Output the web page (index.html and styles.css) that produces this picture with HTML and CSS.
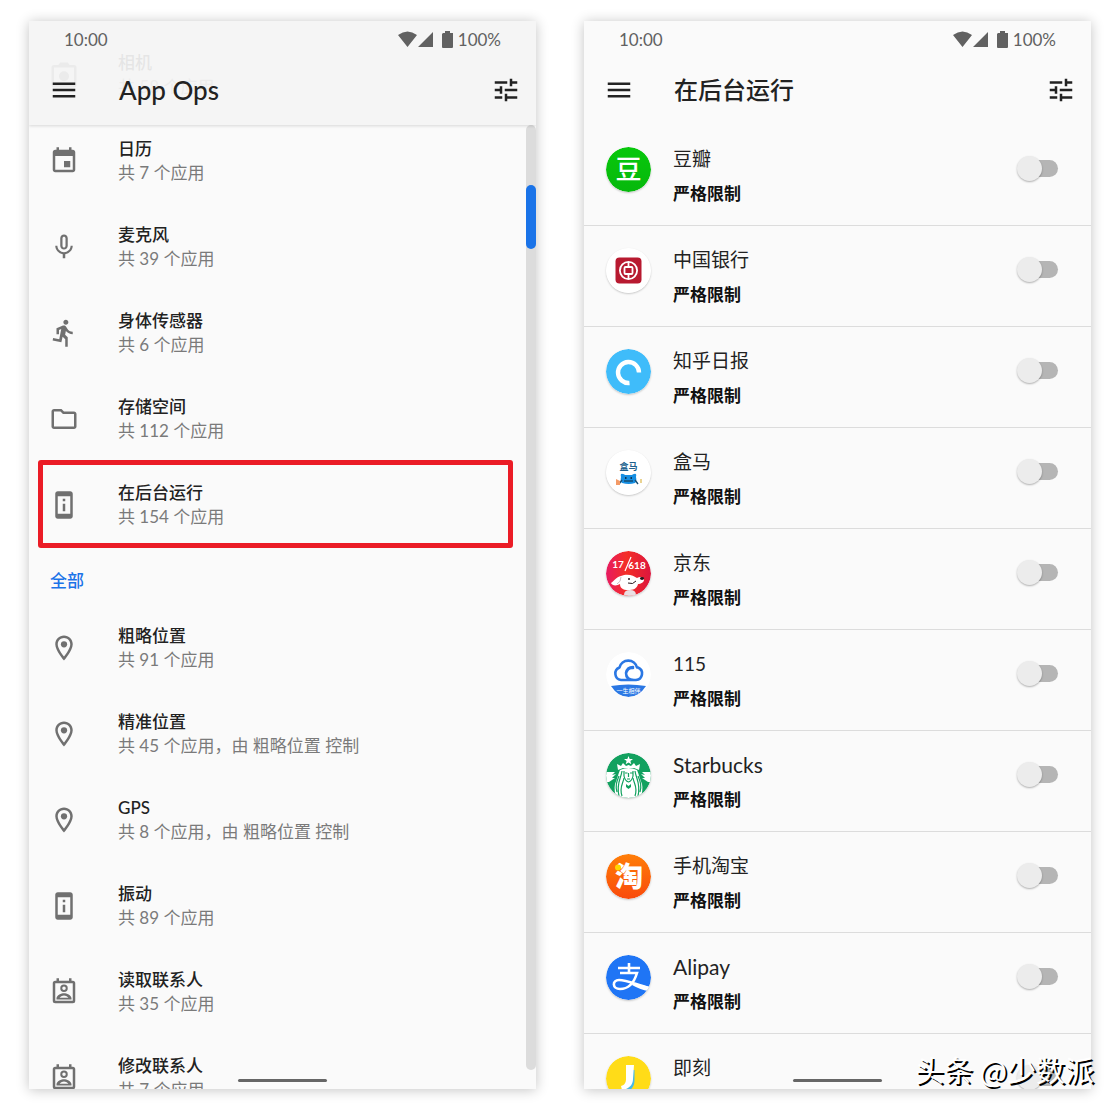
FILE: index.html
```html
<!DOCTYPE html>
<html lang="zh-CN">
<head>
<meta charset="utf-8">
<meta name="viewport" content="width=device-width, initial-scale=1">
<title>App Ops</title>
<link rel="stylesheet" href="styles.css">
</head>
<body>
<svg class="sprite" aria-hidden="true">
  <symbol id="menu" viewBox="0 0 24 24"><path d="M3 18h18v-2H3v2zm0-5h18v-2H3v2zm0-7v2h18V6H3z"/></symbol>
  <symbol id="tune" viewBox="0 0 24 24"><path d="M3 17v2h6v-2H3zM3 5v2h10V5H3zm10 16v-2h8v-2h-8v-2h-2v6h2zM7 9v2H3v2h4v2h2V9H7zm14 4v-2H11v2h10zm-6-4h2V7h4V5h-4V3h-2v6z"/></symbol>
  <symbol id="signals" viewBox="0 0 56 18"><path d="M0 4Q9.500-3 19 4L9.500 16zM20 16L35 1V16zM45 2h2V0h5v2h3v14q0 1-1 1h-9q-1 0-1-1V3z"/></symbol>
  <symbol id="camera" viewBox="0 0 24 24"><path fill-rule="evenodd" d="M9 2L7.500 4H4a2 2 0 0 0-2 2v14a2 2 0 0 0 2 2h16a2 2 0 0 0 2-2V6a2 2 0 0 0-2-2h-3.500L15 2zM4 6h16v14H4z"/><circle cx="12" cy="13" r="4"/></symbol>
  <symbol id="calendar" viewBox="0 0 24 24"><path d="M17 12h-5v5h5v-5zM16 1v2H8V1H6v2H5c-1.110 0-1.990.9-1.990 2L3 19c0 1.100.89 2 2 2h14c1.100 0 2-.9 2-2V5c0-1.100-.9-2-2-2h-1V1h-2zm3 18H5V8h14v11z"/></symbol>
  <symbol id="mic" viewBox="0 0 24 24"><path d="M12 14c1.660 0 2.990-1.340 2.990-3L15 5c0-1.660-1.340-3-3-3S9 3.340 9 5v6c0 1.660 1.340 3 3 3zm-1.200-9.100c0-.66.54-1.200 1.200-1.200.66 0 1.200.54 1.200 1.200l-.01 6.200c0 .66-.53 1.200-1.190 1.200-.66 0-1.200-.54-1.200-1.200V4.900zm6.500 6.100c0 3-2.540 5.100-5.300 5.100S6.700 14 6.700 11H5c0 3.410 2.720 6.230 6 6.720V21h2v-3.280c3.280-.48 6-3.300 6-6.720h-1.700z"/></symbol>
  <symbol id="run" viewBox="0 0 24 24"><path d="M13.490 5.480c1.100 0 2-.9 2-2s-.9-2-2-2-2 .9-2 2 .9 2 2 2zm-3.600 13.900l1-4.400 2.100 2v6h2v-7.500l-2.100-2 .6-3c1.300 1.500 3.300 2.500 5.500 2.500v-2c-1.900 0-3.500-1-4.300-2.400l-1-1.600c-.4-.6-1-1-1.700-1-.3 0-.5.1-.8.1l-5.200 2.200v4.700h2v-3.400l1.800-.7-1.600 8.100-4.900-1-.4 2 7 1.400z"/></symbol>
  <symbol id="folder" viewBox="0 0 24 24"><path fill-rule="evenodd" d="M9.170 6l2 2H20v10H4V6h5.170M10 4H4c-1.100 0-1.990.9-1.990 2L2 18c0 1.100.9 2 2 2h16c1.100 0 2-.9 2-2V8c0-1.100-.9-2-2-2h-8l-2-2z"/></symbol>
  <symbol id="device" viewBox="0 0 24 24"><path d="M13 7h-2v2h2V7zm0 4h-2v6h2v-6zm4-9.990L7 1c-1.100 0-2 .9-2 2v18c0 1.100.9 2 2 2h10c1.100 0 2-.9 2-2V3c0-1.100-.9-1.990-2-1.990zM17 19H7V5h10v14z"/></symbol>
  <symbol id="place" viewBox="0 0 24 24"><path d="M12 2C8.130 2 5 5.130 5 9c0 5.250 7 13 7 13s7-7.750 7-13c0-3.870-3.130-7-7-7zM7 9c0-2.760 2.240-5 5-5s5 2.240 5 5c0 2.880-2.880 7.190-5 9.880C9.920 16.210 7 11.850 7 9z"/><circle cx="12" cy="9" r="2.500"/></symbol>
  <symbol id="contact" viewBox="0 0 24 24"><path fill-rule="evenodd" d="M5 3h1V1h2v2h8V1h2v2h1a2 2 0 0 1 2 2v14a2 2 0 0 1-2 2H5a2 2 0 0 1-2-2V5a2 2 0 0 1 2-2zM5 5v14h14V5zM12 6a3 3 0 1 1 0 6a3 3 0 0 1 0-6zM12 7.600a1.400 1.400 0 1 0 0 2.800a1.400 1.400 0 0 0 0-2.800zM6 18v-1c0-2.500 4-4 6-4s6 1.500 6 4v1zM8.500 16.500h7C14.500 15.300 13 14.700 12 14.700s-2.500.6-3.500 1.800z"/></symbol>
</svg>

<main class="stage">
  <section class="phone">
    <header class="header header-raised">
      <div class="status"><span>10:00</span><span class="status-right"><svg class="signals"><use href="#signals"/></svg>100%</span></div>
      <div class="bar">
        <button class="icon-button" aria-label="菜单"><svg class="icon"><use href="#menu"/></svg></button>
        <h1 class="latin-title">App Ops</h1>
        <button class="icon-button" aria-label="筛选"><svg class="icon"><use href="#tune"/></svg></button>
      </div>
    </header>
    <div class="viewport">
      <div class="list">
        <a class="op" href="#"><svg class="icon"><use href="#camera"/></svg><span><b>相机</b><small>共 58 个应用</small></span></a>
        <a class="op" href="#"><svg class="icon"><use href="#calendar"/></svg><span><b>日历</b><small>共 7 个应用</small></span></a>
        <a class="op" href="#"><svg class="icon"><use href="#mic"/></svg><span><b>麦克风</b><small>共 39 个应用</small></span></a>
        <a class="op" href="#"><svg class="icon"><use href="#run"/></svg><span><b>身体传感器</b><small>共 6 个应用</small></span></a>
        <a class="op" href="#"><svg class="icon"><use href="#folder"/></svg><span><b>存储空间</b><small>共 112 个应用</small></span></a>
        <a class="op op-marked" href="#"><svg class="icon"><use href="#device"/></svg><span><b>在后台运行</b><small>共 154 个应用</small></span></a>
        <h2>全部</h2>
        <a class="op" href="#"><svg class="icon"><use href="#place"/></svg><span><b>粗略位置</b><small>共 91 个应用</small></span></a>
        <a class="op" href="#"><svg class="icon"><use href="#place"/></svg><span><b>精准位置</b><small>共 45 个应用，由 粗略位置 控制</small></span></a>
        <a class="op" href="#"><svg class="icon"><use href="#place"/></svg><span><b>GPS</b><small>共 8 个应用，由 粗略位置 控制</small></span></a>
        <a class="op" href="#"><svg class="icon"><use href="#device"/></svg><span><b>振动</b><small>共 89 个应用</small></span></a>
        <a class="op" href="#"><svg class="icon"><use href="#contact"/></svg><span><b>读取联系人</b><small>共 35 个应用</small></span></a>
        <a class="op" href="#"><svg class="icon"><use href="#contact"/></svg><span><b>修改联系人</b><small>共 7 个应用</small></span></a>
      </div>
      <div class="track"><div class="thumb"></div></div>
    </div>
    <div class="home"></div>
  </section>

  <section class="phone">
    <header class="header">
      <div class="status"><span>10:00</span><span class="status-right"><svg class="signals"><use href="#signals"/></svg>100%</span></div>
      <div class="bar">
        <button class="icon-button" aria-label="菜单"><svg class="icon"><use href="#menu"/></svg></button>
        <h1>在后台运行</h1>
        <button class="icon-button" aria-label="筛选"><svg class="icon"><use href="#tune"/></svg></button>
      </div>
    </header>
    <div class="viewport">
      <div class="apps">
        <label class="app">
          <svg class="logo" viewBox="0 0 45 45"><defs><linearGradient id="g1" x2="0" y2="1"><stop stop-color="#08c80c"/><stop offset="1" stop-color="#06b80c"/></linearGradient></defs><circle cx="22.500" cy="22.500" r="22.500" fill="url(#g1)"/><text x="22.500" y="32" font-size="26" font-weight="500" fill="#fff">豆</text></svg>
          <span class="app-text"><span>豆瓣</span><strong>严格限制</strong></span><input type="checkbox" class="switch">
        </label>
        <label class="app">
          <svg class="logo" viewBox="0 0 45 45"><circle cx="22.500" cy="22.500" r="22.500" fill="#fff"/><rect x="9.500" y="9.500" width="26" height="26" rx="4" fill="#b81a30"/><g fill="none" stroke="#fff" stroke-width="1.800"><circle cx="22.500" cy="22.500" r="8.600"/><rect x="18.500" y="19" width="8" height="7" rx="1"/><path d="M22.500 14v5M22.500 26v5"/></g></svg>
          <span class="app-text"><span>中国银行</span><strong>严格限制</strong></span><input type="checkbox" class="switch">
        </label>
        <label class="app">
          <svg class="logo" viewBox="0 0 45 45"><circle cx="22.500" cy="22.500" r="22.500" fill="#3fbcfa"/><path d="M33 23.500a10.500 10.500 0 1 0-9.500 10.500" fill="none" stroke="#fff" stroke-width="4.400"/></svg>
          <span class="app-text"><span>知乎日报</span><strong>严格限制</strong></span><input type="checkbox" class="switch">
        </label>
        <label class="app">
          <svg class="logo" viewBox="0 0 45 45"><circle cx="22.500" cy="22.500" r="22.500" fill="#fff"/><text x="22.500" y="20" font-size="9" font-weight="700" fill="#20608c">盒马</text><path d="M15 27q-1-4 2-3 1 0 2 1h7q1-1 2-1 3-1 2 3 1 4-1 6-6 2-13 0-2-2-1-6z" fill="#168ee2"/><path d="M16 30l-3 4M29 30l3 4M18 31h9" stroke="#174d72" stroke-width="1.400"/><path d="M19 28h1.500M24.500 28H26" stroke="#0d3656" stroke-width="2"/><path d="M10 29l4 2v4h-4z" fill="#f39a67"/><path d="M35 29v4" stroke="#ead391" stroke-width="2"/></svg>
          <span class="app-text"><span>盒马</span><strong>严格限制</strong></span><input type="checkbox" class="switch">
        </label>
        <label class="app">
          <svg class="logo" viewBox="0 0 45 45"><defs><linearGradient id="g2"><stop stop-color="#e71b62"/><stop offset=".45" stop-color="#f42e27"/><stop offset="1" stop-color="#dc163e"/></linearGradient></defs><circle cx="22.500" cy="22.500" r="22.500" fill="url(#g2)"/><text x="12" y="17" font-size="10" font-weight="700" fill="#fff">17</text><text x="31" y="18" font-size="10" font-weight="700" fill="#fff">618</text><path d="M25 6l-6 14" stroke="#fff" stroke-width="1.200"/><path d="M5 32c3-2 5-6 10-7 7-3 13 0 16 2 3-2 7-1 7 2 0 2-3 4-6 4-1 5-5 6-10 6-5 0-8-2-8-6-3 2-8 2-9-1z" fill="#fff"/><path d="M18 44q0-5 6-5t6 5q-6 2-12 0z" fill="#eadfe3"/><circle cx="23" cy="28" r="1" fill="#28151b"/><path d="M22 32q5 2 8-2" fill="none" stroke="#28151b"/><ellipse cx="36" cy="27.500" rx="2" ry="1.400" fill="#28151b"/><path d="M15 26q0 5-4 7" fill="none" stroke="#cfbcc5"/></svg>
          <span class="app-text"><span>京东</span><strong>严格限制</strong></span><input type="checkbox" class="switch">
        </label>
        <label class="app">
          <svg class="logo logo-flat" viewBox="0 0 45 45"><circle cx="22.500" cy="22.500" r="22.500" fill="#fff"/><path d="M20 21q1-6 7-6M20 21q0 7 8 7h2a6.500 6.500 0 0 0 2-12.500h-1a9 9 0 0 0-17.500 0 6.500 6.500 0 0 0 1.500 12.500h13M20 21q2-6 7-5" fill="none" stroke="#2b78e4" stroke-width="2.600" stroke-linecap="round" stroke-linejoin="round"/><path d="M5 34q17-3 35 0-7 11-17.500 11T5 34z" fill="#2b78e4"/><text x="22.500" y="41" font-size="6" fill="#fff">一生相伴</text></svg>
          <span class="app-text"><span>115</span><strong>严格限制</strong></span><input type="checkbox" class="switch">
        </label>
        <label class="app">
          <svg class="logo" viewBox="0 0 45 45"><defs><clipPath id="round"><circle cx="22.500" cy="22.500" r="22.500"/></clipPath></defs><g clip-path="url(#round)"><path fill="#12a15f" d="M0 0h45v45H0z"/><path fill="#fff" d="M22.500 3l1.200 3 3.300.1-2.600 2 .9 3.200-2.800-1.900-2.800 1.900.9-3.200-2.600-2 3.300-.1zM12 17l-1-6 4 2 2-3 3 3 2.500-1 2.500 1 3-3 2 3 4-2-1 6-5-2H17zM0 19h9l-3 3 4-1-4 4 3 0-6 4H0zM45 19h-9l3 3-4-1 4 4-3 0 6 4h3z"/><path fill="#fff" d="M14 17q8.500-4 17 0c2 5 3 9 5 14 1 4 0 9-1 14H10C9 40 8 36 9 31c2-5 3-9 5-14z"/><g fill="none" stroke="#12a15f" stroke-width="1.200"><path d="M16 18c-1 8-6 12-3 25M18 25c-1 6-5 9-2 18M29 18c1 8 6 12 3 25M27 25c1 6 5 9 2 18M13 23c-2 5-4 9-2 16M32 23c2 5 4 9 2 16"/><path d="M18 18v5q1 5 4.500 6 3.500-1 4.500-6v-5M19 20h2.500M24 20h2.500M22.500 20v4M21 26h3"/></g><path fill="#12a15f" d="M20 31l2.500 2 2.500-2v3l-2.500 2-2.500-2z"/></g></svg>
          <span class="app-text"><span class="latin-name">Starbucks</span><strong>严格限制</strong></span><input type="checkbox" class="switch">
        </label>
        <label class="app">
          <svg class="logo" viewBox="0 0 45 45"><defs><linearGradient id="g3" x2="0" y2="1"><stop stop-color="#ff7e08"/><stop offset="1" stop-color="#f94a0b"/></linearGradient></defs><circle cx="22.500" cy="22.500" r="22.500" fill="url(#g3)"/><text x="23" y="33" font-size="28" font-weight="900" fill="#fff">淘</text><circle cx="12" cy="13.500" r="3" fill="#ffd500"/></svg>
          <span class="app-text"><span>手机淘宝</span><strong>严格限制</strong></span><input type="checkbox" class="switch">
        </label>
        <label class="app">
          <svg class="logo" viewBox="0 0 45 45"><circle cx="22.500" cy="22.500" r="22.500" fill="#1f75f5"/><path d="M12 13h22M23 8v10M14 18h17C28 28 22 34 14 34c-8 0-8-9-1-9 8 0 18 5 30 8" fill="none" stroke="#fff" stroke-width="2.600"/><path d="M27 28l17 4-2 4q-7-1-16-6z" fill="#fff"/></svg>
          <span class="app-text"><span class="latin-name">Alipay</span><strong>严格限制</strong></span><input type="checkbox" class="switch">
        </label>
        <label class="app">
          <svg class="logo" viewBox="0 0 45 45"><circle cx="22.500" cy="22.500" r="22.500" fill="#ffdc18"/><path d="M27 14v10c0 6-3 10-10 11" fill="none" stroke="#45b9e8" stroke-width="3"/><path d="M20 9h8l-1 14c0 6-4 10-11 11l-1-4c4-1 5-4 5-7z" fill="#fff"/></svg>
          <span class="app-text"><span>即刻</span><strong>严格限制</strong></span><input type="checkbox" class="switch">
        </label>
      </div>
    </div>
    <div class="home"></div>
  </section>
</main>
<div class="watermark">头条 @少数派</div>
</body>
</html>
```
FILE: styles.css
```css
* { box-sizing: border-box; }

body {
  margin: 0;
  background: #fff;
  color: #222;
  font: 17px/24px Lato, "Noto Sans CJK SC", sans-serif;
}

.sprite { position: absolute; width: 0; height: 0; }

.stage {
  display: grid;
  grid-template-columns: 1fr 1fr;
  gap: 48px;
  height: 100vh;
  padding: 21px 29px 23px;
}

.phone {
  position: relative;
  display: flex;
  flex-direction: column;
  min-width: 0;
  min-height: 0;
  overflow: hidden;
  background: #fafafa;
  box-shadow: 0 1px 12px rgba(0, 0, 0, .24);
}

.header {
  position: relative;
  z-index: 1;
  flex: none;
  height: 104px;
}

.header-raised {
  background: rgba(244, 244, 244, .93);
  box-shadow: 0 1px 3px rgba(0, 0, 0, .14);
}

.status {
  display: flex;
  justify-content: space-between;
  align-items: center;
  height: 38px;
  padding: 0 35px;
  color: #616161;
}

.status-right { display: flex; align-items: center; gap: 4px; }
.signals { width: 56px; height: 18px; fill: #616161; }

.bar {
  display: flex;
  align-items: center;
  height: 62px;
  padding: 0 15px 0 20px;
}

.bar h1 {
  flex: 1;
  margin: 0 0 0 40px;
  font-size: 24px;
  font-weight: 500;
  line-height: 32px;
}

.bar .latin-title { font-size: 26px; }

.icon-button {
  display: flex;
  padding: 0;
  border: 0;
  background: none;
  color: #222;
}

.icon { flex: none; width: 30px; height: 30px; fill: currentColor; }

.viewport { display: flex; flex: 1; min-height: 0; }
.list { flex: 1; margin-top: -93px; }

.op {
  position: relative;
  display: flex;
  align-items: center;
  gap: 39px;
  height: 86px;
  padding-left: 20px;
  color: #707070;
  text-decoration: none;
}

.op b, .op small { display: block; font-size: 17px; }
.op b { color: #222; font-weight: 500; }
.op small { color: #7a7a7a; }

.op-marked::after {
  content: "";
  position: absolute;
  inset: -2px 13px 0 9px;
  border: 5px solid #eb1c26;
  border-radius: 3px;
}

.list h2 {
  margin: 0;
  padding: 21px 21px 12px;
  color: #1a73e8;
  font-size: 17px;
  font-weight: 500;
}

.track {
  width: 10px;
  margin-bottom: 19px;
  border-radius: 5px;
  background: #dcdcdc;
}

.thumb {
  height: 64px;
  margin-top: 60px;
  border-radius: 5px;
  background: #1a73e8;
}

.home {
  position: absolute;
  bottom: 7px;
  left: 50%;
  width: 89px;
  height: 3px;
  margin-left: -45px;
  border-radius: 2px;
  background: #666;
}

.apps { flex: 1; }

.app {
  display: flex;
  align-items: flex-start;
  height: 101px;
  padding: 0 33px 0 22px;
  border-bottom: 1px solid #dcdcdc;
}

.logo {
  flex: none;
  width: 45px;
  height: 45px;
  margin-top: 22px;
  border-radius: 50%;
  box-shadow: 0 1px 2px rgba(0, 0, 0, .2);
  text-anchor: middle;
}

.logo-flat { box-shadow: none; }

.app-text {
  flex: 1;
  padding: 16px 0 0 22px;
  font-size: 19px;
  line-height: 35px;
}

.app-text span, .app-text strong { display: block; }
.app-text .latin-name { font-size: 21px; }
.app-text strong { color: #111; font-size: 17px; }

.switch {
  position: relative;
  flex: none;
  appearance: none;
  width: 41px;
  height: 25px;
  margin: 31px 0 0;
}

.switch::before {
  content: "";
  position: absolute;
  inset: 4px 0 4px 8px;
  border-radius: 9px;
  background: #b5b5b5;
}

.switch::after {
  content: "";
  position: absolute;
  inset: 0 16px 0 0;
  border-radius: 50%;
  background: #ececec;
  box-shadow: 0 1px 2px rgba(0, 0, 0, .3);
}

.watermark {
  position: absolute;
  right: 26px;
  bottom: 23px;
  z-index: 2;
  color: #fff;
  font: 29px/40px "Noto Sans CJK SC", sans-serif;
  text-shadow: 2px 2px 0 #000;
}
```
